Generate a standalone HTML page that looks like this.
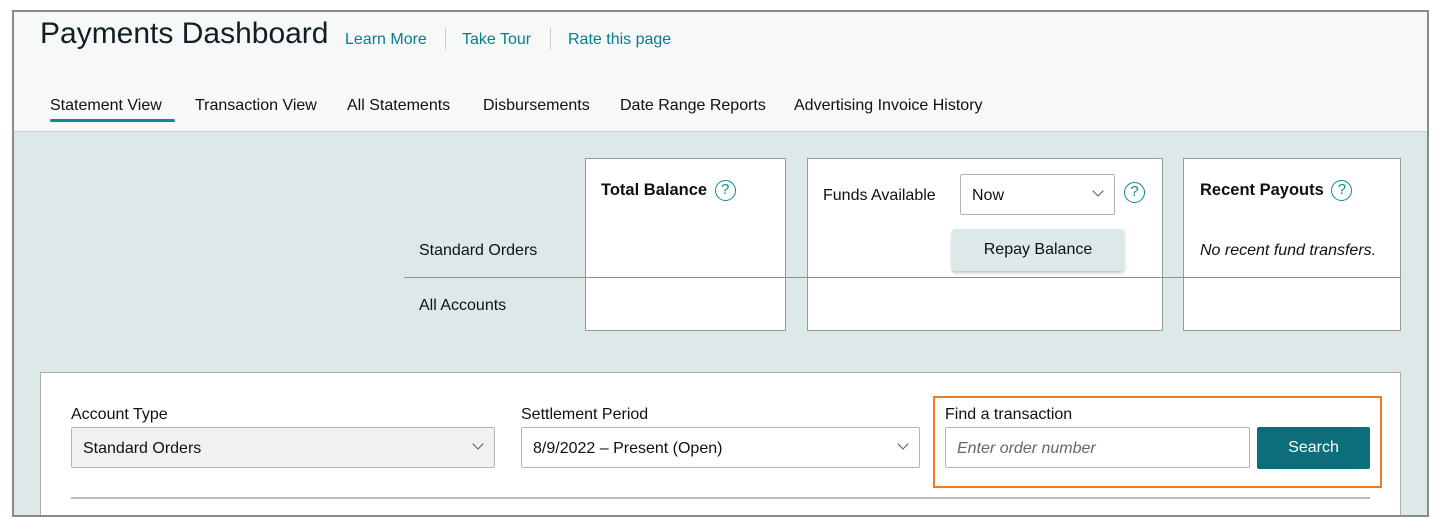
<!DOCTYPE html>
<html><head><style>
*{box-sizing:border-box;margin:0;padding:0}
html,body{width:1440px;height:529px;overflow:hidden}
body{background:#fff;font-family:"Liberation Sans",sans-serif;color:#0f1111;position:relative}
.a{position:absolute;white-space:nowrap}
.frame{position:absolute;left:12px;top:10px;width:1417px;height:507px;border:2px solid #8a8a8a;background:#dde8e8;overflow:hidden}
.hdr{position:absolute;left:0;top:0;width:100%;height:120px;background:#f7f8f8;border-bottom:1px solid #c8cccc}
.link{color:#087e8b;font-size:16px}
.tab{font-size:16px;color:#0f1111;top:97px}
.card{position:absolute;background:#fff;border:1px solid #999;top:158px;height:173px}
.q{display:inline-block;width:21px;height:21px;border:1.5px solid #0b8a96;border-radius:50%;color:#0b8a96;font-size:15px;font-weight:normal;text-align:center;line-height:18px;vertical-align:middle;margin-left:3px}
.sel{position:absolute;border:1px solid #b0b5b5;border-radius:2px;height:41px;font-size:16px;padding:12px 11px}
.chev{position:absolute;right:12px;top:12px;width:8px;height:8px;border-right:1.5px solid #555;border-bottom:1.5px solid #555;transform:rotate(45deg)}
.lbl{font-size:16px}
</style></head><body>
<div class="frame">
 <div class="hdr"></div>
</div>
<div class="a" style="left:40px;top:17px;font-size:30px;color:#0f1f24">Payments Dashboard</div>
<div class="a link" style="left:345px;top:31px">Learn More</div>
<div class="a" style="left:445px;top:28px;width:1px;height:22px;background:#ccc"></div>
<div class="a link" style="left:462px;top:31px">Take Tour</div>
<div class="a" style="left:550px;top:28px;width:1px;height:22px;background:#ccc"></div>
<div class="a link" style="left:568px;top:31px">Rate this page</div>
<div class="a tab" style="left:50px">Statement View</div>
<div class="a" style="left:50px;top:119px;width:125px;height:3px;background:#0e8a96;border-radius:2px"></div>
<div class="a tab" style="left:195px">Transaction View</div>
<div class="a tab" style="left:347px">All Statements</div>
<div class="a tab" style="left:483px">Disbursements</div>
<div class="a tab" style="left:620px">Date Range Reports</div>
<div class="a tab" style="left:794px">Advertising Invoice History</div>

<div class="card" style="left:585px;width:201px"></div>
<div class="card" style="left:807px;width:356px"></div>
<div class="card" style="left:1183px;width:218px"></div>
<div class="a" style="left:404px;top:277px;width:997px;height:1px;background:#8c9494"></div>
<div class="a lbl" style="left:419px;top:242px">Standard Orders</div>
<div class="a lbl" style="left:419px;top:297px">All Accounts</div>
<div class="a" style="left:601px;top:180px;font-size:16.5px;font-weight:bold">Total Balance <span class="q">?</span></div>
<div class="a lbl" style="left:823px;top:187px">Funds Available</div>
<div class="sel" style="left:960px;top:174px;width:155px;background:#fff">Now<span class="chev"></span></div>
<div class="a" style="left:1121px;top:182px"><span class="q">?</span></div>
<div class="a" style="left:952px;top:229px;width:172px;height:42px;background:#dde8e8;border-radius:3px;box-shadow:0 2px 3px rgba(0,0,0,.25);font-size:16px;text-align:center;line-height:42px">Repay Balance</div>
<div class="a" style="left:1200px;top:180px;font-size:16.5px;font-weight:bold">Recent Payouts <span class="q">?</span></div>
<div class="a" style="left:1200px;top:242px;font-size:16px;font-style:italic">No recent fund transfers.</div>

<div class="a" style="left:40px;top:372px;width:1361px;height:150px;background:#fff;border:1px solid #a8adad;border-bottom:none"></div>
<div class="a lbl" style="left:71px;top:406px">Account Type</div>
<div class="sel" style="left:71px;top:427px;width:424px;background:#f0f2f2">Standard Orders<span class="chev"></span></div>
<div class="a lbl" style="left:521px;top:406px">Settlement Period</div>
<div class="sel" style="left:521px;top:427px;width:399px;background:#fff">8/9/2022 – Present (Open)<span class="chev"></span></div>
<div class="a" style="left:933px;top:396px;width:449px;height:92px;border:2px solid #f07a1c"></div>
<div class="a lbl" style="left:945px;top:406px">Find a transaction</div>
<div class="sel" style="left:945px;top:427px;width:305px;background:#fff;color:#666;font-style:italic">Enter order number</div>
<div class="a" style="left:1257px;top:427px;width:113px;height:42px;background:#0c6e7b;color:#fff;font-size:16px;text-align:center;line-height:42px;border-radius:2px">Search</div>
<div class="a" style="left:71px;top:497px;width:1299px;height:2px;background:#b8bcbc"></div>
<div class="a" style="left:12px;top:515px;width:1417px;height:2px;background:#8a8a8a"></div>
<div class="a" style="left:0;top:517px;width:1440px;height:20px;background:#fff"></div>
</body></html>
